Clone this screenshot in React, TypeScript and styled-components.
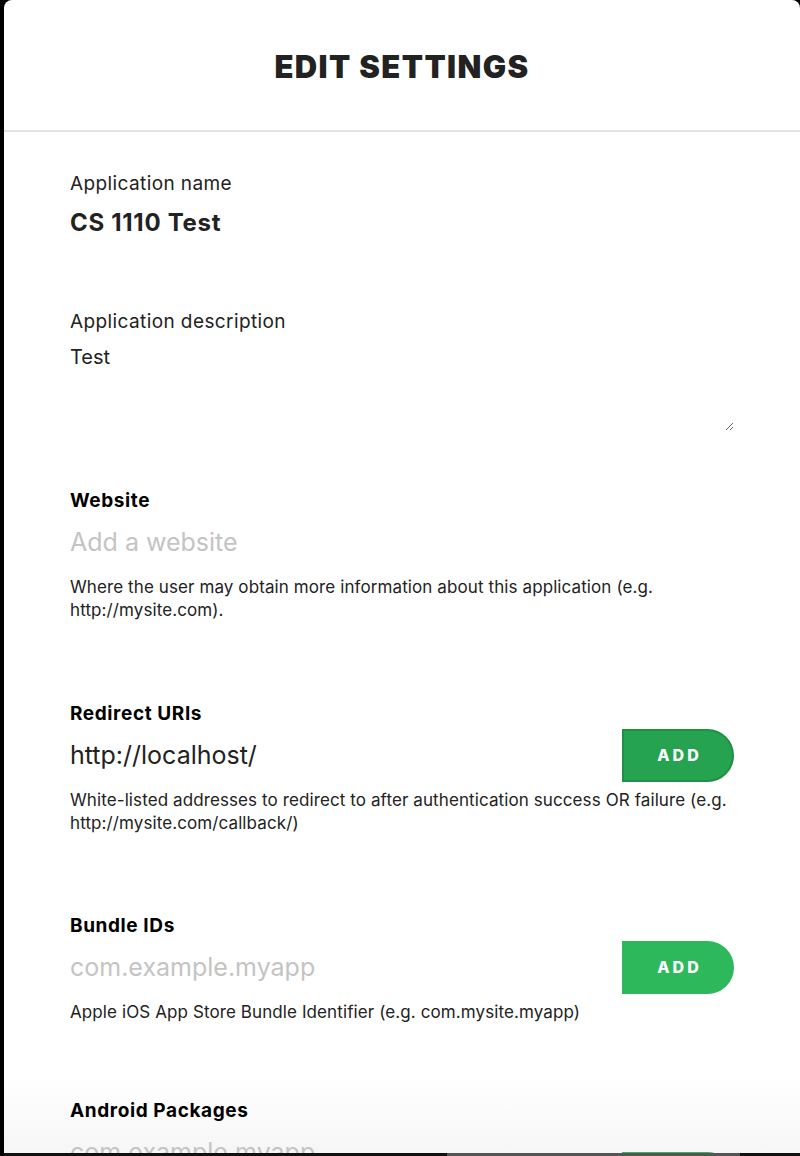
import React from 'react';
import styled, { createGlobalStyle } from 'styled-components';

const Global = createGlobalStyle`
  html, body { margin: 0; padding: 0; background: #000; }
  body { font-family: Inter, "Noto Sans", sans-serif; -webkit-font-smoothing: antialiased; }
  * { box-sizing: border-box; }
`;

const Page = styled.div`
  width: 800px;
  height: 1156px;
  background: #000;
  display: flex;
  flex-direction: column;
  padding-left: 4px;
  overflow: hidden;
`;

const Modal = styled.div`
  width: 796px;
  height: 1153px;
  flex: none;
  border-radius: 8px 8px 0 0;
  overflow: hidden;
  background: linear-gradient(to bottom, #fff 0, #fff 1078px, #f6f6f6 1153px);
  display: flex;
  flex-direction: column;
`;

const Header = styled.header`
  height: 132px;
  flex: none;
  border-bottom: 2px solid #e3e3e3;
  display: flex;
  align-items: center;
  justify-content: center;
  padding-top: 2px;
`;

const Title = styled.h1`
  margin: 0;
  font-size: 31px;
  font-weight: 900;
  letter-spacing: 1.4px;
  color: #222;
`;

const Body = styled.div`
  padding: 40px 66px 0 66px;
  display: flex;
  flex-direction: column;
`;

const Field = styled.section<{ $gap: number }>`
  display: flex;
  flex-direction: column;
  margin-bottom: ${(p) => p.$gap}px;
`;

const Label = styled.label<{ $bold?: boolean }>`
  font-size: 19px;
  line-height: 24px;
  font-weight: ${(p) => (p.$bold ? 700 : 400)};
  letter-spacing: ${(p) => (p.$bold ? 0.6 : 0.4)}px;
  color: ${(p) => (p.$bold ? '#000' : '#222')};
`;

const NameValue = styled.div`
  margin-top: 12px;
  font-size: 24px;
  line-height: 30px;
  font-weight: 700;
  letter-spacing: 0.7px;
  color: #222;
`;

const Description = styled.textarea`
  display: block;
  margin-top: 9px;
  width: 100%;
  height: 88px;
  padding: 0;
  border: none;
  outline: none;
  background: transparent;
  resize: vertical;
  font-family: inherit;
  font-size: 20px;
  line-height: 28px;
  color: #222;
`;

const Row = styled.div`
  margin-top: 2px;
  height: 54px;
  display: flex;
  align-items: center;
  gap: 16px;
`;

const TextInput = styled.input`
  flex: 1;
  min-width: 0;
  border: none;
  outline: none;
  padding: 0;
  background: transparent;
  font-family: inherit;
  font-size: 25px;
  color: #222;
  &::placeholder { color: #c4c4c4; }
`;

const AddButton = styled.button<{ $pressed?: boolean; $drop?: number }>`
  flex: none;
  width: 112px;
  height: 53px;
  border-radius: 0 27px 27px 0;
  border: ${(p) => (p.$pressed ? '2px solid #1f9146' : 'none')};
  background: ${(p) => (p.$pressed ? '#25a350' : '#2db85c')};
  color: #fff;
  font-family: inherit;
  font-size: 16px;
  font-weight: 800;
  letter-spacing: 3px;
  padding: 0 0 0 3px;
  cursor: pointer;
  transform: translateY(${(p) => p.$drop ?? 0}px);
`;

const Help = styled.p`
  margin: 7px 0 0;
  font-size: 17px;
  line-height: 23px;
  letter-spacing: 0.1px;
  color: #222;
`;

const Strip = styled.div`
  height: 3px;
  flex: none;
  display: flex;
  background: #111;
`;

const StripSegment = styled.div`
  margin-left: 443px;
  width: 293px;
  background: #555;
`;

export default function App() {
  return (
    <>
      <Global />
      <Page>
        <Modal>
          <Header>
            <Title>EDIT SETTINGS</Title>
          </Header>
          <Body>
            <Field $gap={72}>
              <Label>Application name</Label>
              <NameValue>CS 1110 Test</NameValue>
            </Field>
            <Field $gap={58}>
              <Label>Application description</Label>
              <Description defaultValue="Test" />
            </Field>
            <Field $gap={80}>
              <Label $bold>Website</Label>
              <Row>
                <TextInput placeholder="Add a website" />
              </Row>
              <Help>
                Where the user may obtain more information about this application (e.g.
                <br />
                http://mysite.com).
              </Help>
            </Field>
            <Field $gap={79}>
              <Label $bold>Redirect URIs</Label>
              <Row>
                <TextInput defaultValue="http://localhost/" />
                <AddButton $pressed>ADD</AddButton>
              </Row>
              <Help>
                White-listed addresses to redirect to after authentication success OR failure (e.g.
                <br />
                http://mysite.com/callback/)
              </Help>
            </Field>
            <Field $gap={75}>
              <Label $bold>Bundle IDs</Label>
              <Row>
                <TextInput placeholder="com.example.myapp" />
                <AddButton>ADD</AddButton>
              </Row>
              <Help>Apple iOS App Store Bundle Identifier (e.g. com.mysite.myapp)</Help>
            </Field>
            <Field $gap={0}>
              <Label $bold>Android Packages</Label>
              <Row>
                <TextInput placeholder="com.example.myapp" />
                <AddButton $drop={26}>ADD</AddButton>
              </Row>
            </Field>
          </Body>
        </Modal>
        <Strip>
          <StripSegment />
        </Strip>
      </Page>
    </>
  );
}
